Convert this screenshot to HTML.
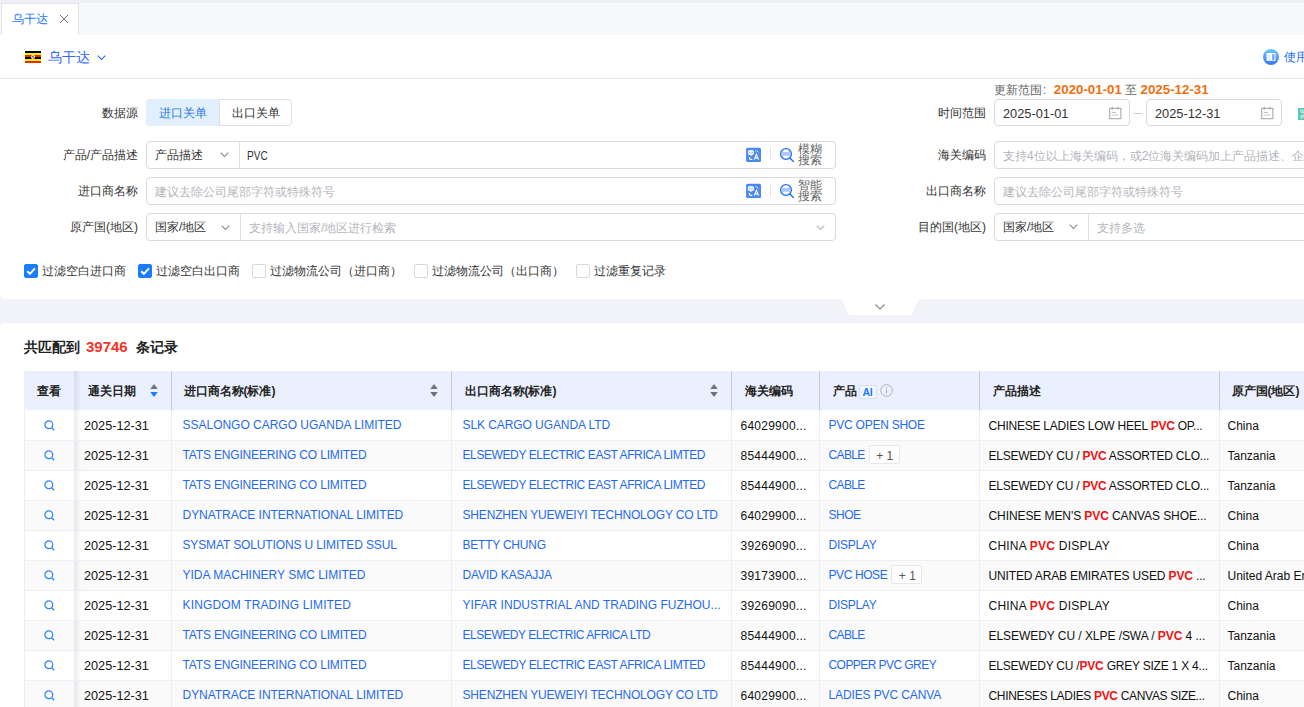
<!DOCTYPE html>
<html><head><meta charset="utf-8">
<style>
*{box-sizing:border-box;margin:0;padding:0}
html,body{width:1304px;height:707px;overflow:hidden;background:#f2f3f8;font-family:"Liberation Sans",sans-serif;color:#333;font-size:12px}
.a{position:absolute}
.nowrap{white-space:nowrap}
#topstrip{left:0;top:0;width:1304px;height:3px;background:#eef0f5}
#tabbar{left:0;top:3px;width:1304px;height:32px;background:#f7f8fa}
#tab{left:1px;top:3px;width:78px;height:32px;background:#fff;border:1px solid #e2e4e8;border-bottom:none}
#page{left:0;top:35px;width:1304px;height:264px;background:#fff;border-radius:0 0 0 5px}
.lbl{position:absolute;text-align:right;white-space:nowrap;font-size:12px;color:#333;line-height:14px}
.inp{position:absolute;height:28px;border:1px solid #d9dadd;border-radius:4px;background:#fff}
.ph{position:absolute;color:#b3b5ba;white-space:nowrap;font-size:12px;line-height:14px}
.tx{position:absolute;color:#333;white-space:nowrap;font-size:12px;line-height:14px}
.chev{position:absolute;width:7px;height:7px;border-right:1px solid #a8abb2;border-bottom:1px solid #a8abb2;transform:rotate(45deg)}
.cb{position:absolute;width:14px;height:14px;border:1px solid #d9d9d9;border-radius:2px;background:#fff}
.cb.on{background:#1a7cff;border-color:#1a7cff}
.cbt{position:absolute;top:264px;font-size:12px;line-height:14px;white-space:nowrap;color:#333}
#results{left:0;top:323px;width:1304px;height:400px;background:#fff;border-radius:5px 0 0 0}
table{position:absolute;left:24px;top:371px;border-collapse:collapse;table-layout:fixed;width:1315px}
th{height:39px;padding-top:1px;background:#eaf0fd;font-weight:bold;font-size:12px;text-align:left;white-space:nowrap;color:#222;position:relative}
td{height:30px;border-bottom:1px solid #ebeef5;border-right:1px solid #ebeef5;white-space:nowrap;overflow:hidden;font-size:12px;color:#111;padding:0 0 0 10px;line-height:29px;vertical-align:top}
tr:nth-child(odd) td{background-color:#fafafa}
th.hs{border-left:1px solid #c5c9d2}
th.h1,td.c1{background-image:linear-gradient(to right,rgba(20,30,80,.09),rgba(20,30,80,0) 7px)}
td.c0{border-right:none}
.c0{text-align:center;padding:0!important}
.c0 svg{display:inline-block;vertical-align:middle;position:relative;top:0px}
th .sort{position:absolute;right:13px;top:13px}
.ai{display:inline-block;margin-left:2px;width:18px;height:14px;line-height:12px;text-align:center;border:1px solid #d3e0fb;background:#f3f6fe;color:#1a7cff;font-size:10.5px;font-weight:bold;vertical-align:-1px;border-radius:2px;letter-spacing:-.2px}
th .info{vertical-align:-2px;margin-left:3px}
td.c1{font-size:12.7px;padding-left:10px}
td.c2,td.c3{padding-left:11px}
td.c4{letter-spacing:.25px;padding-left:9px}
td.c5{padding-left:9px}
td.c6{padding-left:9px;text-overflow:clip}
td.c7{padding-left:8px}
.lnk{color:#1f6af2}
.lnk span{position:relative;top:0px}
.p{position:relative;top:1px}
.lnk span.tag{top:0}
tr:nth-child(2) .p{top:2px}
tr:nth-child(2) .lnk span{top:1px}
tr:nth-child(2) .c0 svg{top:1px}
.tag{display:inline-block;margin-left:4px;width:31px;text-align:center;height:19px;line-height:20px;padding:0 0 0 1px;border:1px solid #e6e7ea;border-radius:2px;color:#555;background:#fff;font-size:12px;vertical-align:top;margin-top:4px;letter-spacing:0}
.red{color:#f01414;font-weight:bold}
</style></head><body>
<div id="topstrip" class="a"></div>
<div id="tabbar" class="a"></div>
<div id="tab" class="a"></div>
<div class="a nowrap" style="left:12px;top:12px;font-size:12px;line-height:14px;color:#1a7cff">乌干达</div>
<svg class="a" style="left:59px;top:14px" width="10" height="10" viewBox="0 0 10 10"><path d="M1 1L9 9M9 1L1 9" stroke="#707070" stroke-width="1"/></svg>

<div id="page" class="a"></div>
<!-- country header -->
<svg class="a" style="left:25px;top:51px" width="16" height="12" viewBox="0 0 16 12">
<rect y="0" width="16" height="2" fill="#000"/><rect y="2" width="16" height="2" fill="#fff200"/><rect y="4" width="16" height="2" fill="#e52c00"/><rect y="6" width="16" height="2" fill="#000"/><rect y="8" width="16" height="2" fill="#fff200"/><rect y="10" width="16" height="2" fill="#e52c00"/><circle cx="8" cy="6" r="2" fill="#fff"/><circle cx="7.6" cy="5.6" r="0.8" fill="#555"/><circle cx="8.5" cy="6.5" r="0.7" fill="#d33"/></svg>
<div class="a nowrap" style="left:48px;top:49px;font-size:14px;line-height:16px;color:#2f6bff;font-weight:500">乌干达</div>
<svg class="a" style="left:97px;top:54.5px" width="9" height="6" viewBox="0 0 9 6"><path d="M0.7 0.7L4.5 4.5L8.3 0.7" fill="none" stroke="#2f6bff" stroke-width="1.15"/></svg>
<div class="a" style="left:0;top:78px;width:1304px;height:1px;background:#e8e9ec"></div>
<svg class="a" style="left:1263px;top:49px" width="16" height="16" viewBox="0 0 16 16"><defs><linearGradient id="g1" x1="0" y1="0" x2="0" y2="1"><stop offset="0" stop-color="#6cc9ff"/><stop offset="1" stop-color="#3a76f4"/></linearGradient></defs><circle cx="8" cy="8" r="8" fill="url(#g1)"/><path d="M4.1 4.6h3.6v6.6H4.1Z" fill="#dff0ff" stroke="#fff" stroke-width="1.1"/><path d="M8.5 4.6h3.5v6.6H8.5Z" fill="none" stroke="#fff" stroke-width="1.1"/><path d="M9.6 5.5v4.8M10.8 5.5v4.8" stroke="#8fc4ff" stroke-width="0.6"/></svg>
<div class="a nowrap" style="left:1284px;top:50px;font-size:12px;line-height:14px;color:#1f6cff">使用</div>

<!-- left form -->
<div class="lbl" style="right:1166px;top:106px">数据源</div>
<div class="a" style="left:146px;top:99px;width:146px;height:27px;border:1px solid #dcdfe6;border-radius:4px;background:#fff"></div>
<div class="a" style="left:146px;top:99px;width:74px;height:27px;border-radius:4px 0 0 4px;background:#e1f0fc"></div>
<div class="a" style="left:219px;top:99px;width:1px;height:27px;background:#dcdfe6"></div>
<div class="tx" style="left:159px;top:106px;color:#2a7ae2">进口关单</div>
<div class="tx" style="left:232px;top:106px">出口关单</div>

<div class="lbl" style="right:1166px;top:148px">产品/产品描述</div>
<div class="inp" style="left:146px;top:141px;width:690px"></div>
<div class="a" style="left:239px;top:142px;width:1px;height:26px;background:#dcdfe6"></div>
<div class="tx" style="left:155px;top:148px">产品描述</div>
<svg class="a" style="left:219.5px;top:152.3px" width="9" height="6" viewBox="0 0 9 6"><path d="M0.7 0.7L4.5 4.5L8.3 0.7" fill="none" stroke="#8b8d96" stroke-width="1.1"/></svg>
<div class="tx" style="left:247px;top:149px;font-size:12px;transform:scaleX(.84);transform-origin:0 0">PVC</div>

<div class="lbl" style="right:1166px;top:184px">进口商名称</div>
<div class="inp" style="left:146px;top:177px;width:690px"></div>
<div class="ph" style="left:155px;top:185px">建议去除公司尾部字符或特殊符号</div>

<div class="lbl" style="right:1166px;top:220px">原产国(地区)</div>
<div class="inp" style="left:146px;top:213px;width:690px"></div>
<div class="a" style="left:240px;top:214px;width:1px;height:26px;background:#dcdfe6"></div>
<div class="tx" style="left:155px;top:220px">国家/地区</div>
<svg class="a" style="left:220.5px;top:224.5px" width="9" height="6" viewBox="0 0 9 6"><path d="M0.7 0.7L4.5 4.5L8.3 0.7" fill="none" stroke="#8b8d96" stroke-width="1.1"/></svg>
<div class="ph" style="left:249px;top:221px">支持输入国家/地区进行检索</div>
<svg class="a" style="left:816px;top:224.5px" width="9" height="6" viewBox="0 0 9 6"><path d="M0.7 0.7L4.5 4.5L8.3 0.7" fill="none" stroke="#b5b7bd" stroke-width="1.1"/></svg>

<!-- icons row1/2 -->
<svg class="a" style="left:746px;top:147px" width="16" height="16" viewBox="0 0 16 16"><rect x="0.1" y="0.7" width="14.9" height="14.4" rx="1.5" fill="#4b88f1"/><rect x="2.4" y="3.9" width="5" height="3.5" rx="0.9" fill="#9fc0f8" stroke="#fff" stroke-width="1.1"/><path d="M4.9 2.9v6" stroke="#fff" stroke-width="1.1"/><path d="M9.4 3.5L11.2 4.2L12.5 5.8" fill="none" stroke="#fff" stroke-width="1" stroke-dasharray="1.2 0.6"/><path d="M3.5 10.1v1.1q0 1.2 1.1 1.2h1.7" fill="none" stroke="#fff" stroke-width="1.1"/><path d="M8.3 12.6L10.4 7.2L12.6 12.6M9.1 10.9h2.6" fill="none" stroke="#fff" stroke-width="1.1"/></svg>
<div class="a" style="left:770px;top:147px;width:1px;height:14px;background:#e4e6ea"></div>
<svg class="a" style="left:779px;top:147px" width="16" height="16" viewBox="0 0 16 16"><circle cx="7" cy="7" r="5.4" fill="none" stroke="#1f6ff3" stroke-width="1.35"/><path d="M10.9 10.9L14.4 14.4" stroke="#1f6ff3" stroke-width="1.4" stroke-linecap="round"/><rect x="3.1" y="4.9" width="7.8" height="3.9" rx="0.6" fill="#a9c7fb"/><path d="M8.8 4.9L10.6 3.6V4.9Z" fill="#8fb5f9"/><path d="M5.2 8.8L3.4 10.1V8.8Z" fill="#8fb5f9"/></svg>
<div class="a" style="left:798px;top:144px;font-size:12px;line-height:11px;color:#666;width:26px">模糊<br>搜索</div>

<svg class="a" style="left:746px;top:183px" width="16" height="16" viewBox="0 0 16 16"><rect x="0.1" y="0.7" width="14.9" height="14.4" rx="1.5" fill="#4b88f1"/><rect x="2.4" y="3.9" width="5" height="3.5" rx="0.9" fill="#9fc0f8" stroke="#fff" stroke-width="1.1"/><path d="M4.9 2.9v6" stroke="#fff" stroke-width="1.1"/><path d="M9.4 3.5L11.2 4.2L12.5 5.8" fill="none" stroke="#fff" stroke-width="1" stroke-dasharray="1.2 0.6"/><path d="M3.5 10.1v1.1q0 1.2 1.1 1.2h1.7" fill="none" stroke="#fff" stroke-width="1.1"/><path d="M8.3 12.6L10.4 7.2L12.6 12.6M9.1 10.9h2.6" fill="none" stroke="#fff" stroke-width="1.1"/></svg>
<div class="a" style="left:770px;top:183px;width:1px;height:14px;background:#e4e6ea"></div>
<svg class="a" style="left:779px;top:183px" width="16" height="16" viewBox="0 0 16 16"><circle cx="7" cy="7" r="5.4" fill="none" stroke="#1f6ff3" stroke-width="1.35"/><path d="M10.9 10.9L14.4 14.4" stroke="#1f6ff3" stroke-width="1.4" stroke-linecap="round"/><rect x="3.1" y="4.9" width="7.8" height="3.9" rx="0.6" fill="#a9c7fb"/><path d="M8.8 4.9L10.6 3.6V4.9Z" fill="#8fb5f9"/><path d="M5.2 8.8L3.4 10.1V8.8Z" fill="#8fb5f9"/></svg>
<div class="a" style="left:798px;top:180px;font-size:12px;line-height:11px;color:#666;width:26px">智能<br>搜索</div>

<!-- right form -->
<div class="a nowrap" style="left:994px;top:83px;font-size:12px;line-height:14px;color:#666">更新范围<span style="margin:0 7.5px 0 1px">:</span><b style="color:#f06f0c;font-size:13.3px">2020-01-01</b> 至 <b style="color:#f06f0c;font-size:13.3px">2025-12-31</b></div>
<div class="lbl" style="right:318px;top:106px">时间范围</div>
<div class="inp" style="left:994px;top:99px;width:136px;height:27px"></div>
<div class="tx" style="left:1003px;top:107px;font-size:12.8px">2025-01-01</div>
<svg class="a" style="left:1109px;top:106px" width="13" height="14" viewBox="0 0 13 14"><rect x="0.7" y="2.4" width="11.2" height="10.3" fill="none" stroke="#a9a9a9" stroke-width="1.1"/><path d="M3.3 0.8v2.6M8.9 0.8v2.6" stroke="#a9a9a9" stroke-width="1.3"/><path d="M2.7 6.4h4.3" stroke="#a9a9a9" stroke-width="0.9"/><path d="M2.7 9.1h6.5" stroke="#c4c4c4" stroke-width="1"/></svg>
<div class="a" style="left:1134px;top:113px;width:8px;height:1px;background:#ccc"></div>
<div class="inp" style="left:1146px;top:99px;width:136px;height:27px"></div>
<div class="tx" style="left:1155px;top:107px;font-size:12.8px">2025-12-31</div>
<svg class="a" style="left:1261px;top:106px" width="13" height="14" viewBox="0 0 13 14"><rect x="0.7" y="2.4" width="11.2" height="10.3" fill="none" stroke="#a9a9a9" stroke-width="1.1"/><path d="M3.3 0.8v2.6M8.9 0.8v2.6" stroke="#a9a9a9" stroke-width="1.3"/><path d="M2.7 6.4h4.3" stroke="#a9a9a9" stroke-width="0.9"/><path d="M2.7 9.1h6.5" stroke="#c4c4c4" stroke-width="1"/></svg>
<svg class="a" style="left:1298px;top:108px" width="8" height="12" viewBox="0 0 8 12"><rect width="8" height="12" fill="#5ec9b8"/><circle cx="4" cy="3.2" r="1.3" fill="none" stroke="#e8f8f5" stroke-width="0.9"/><circle cx="4" cy="8.6" r="1.3" fill="none" stroke="#e8f8f5" stroke-width="0.9"/><path d="M5 4.2L7 6L5 7.6" fill="none" stroke="#e8f8f5" stroke-width="0.9"/></svg>

<div class="lbl" style="right:318px;top:148px">海关编码</div>
<div class="inp" style="left:994px;top:141px;width:340px"></div>
<div class="ph" style="left:1003px;top:149px">支持4位以上海关编码，或2位海关编码加上产品描述、企业名称</div>

<div class="lbl" style="right:318px;top:184px">出口商名称</div>
<div class="inp" style="left:994px;top:177px;width:340px"></div>
<div class="ph" style="left:1003px;top:185px">建议去除公司尾部字符或特殊符号</div>

<div class="lbl" style="right:318px;top:220px">目的国(地区)</div>
<div class="inp" style="left:994px;top:213px;width:340px"></div>
<div class="a" style="left:1088px;top:214px;width:1px;height:26px;background:#dcdfe6"></div>
<div class="tx" style="left:1003px;top:220px">国家/地区</div>
<svg class="a" style="left:1068.7px;top:224.2px" width="9" height="6" viewBox="0 0 9 6"><path d="M0.7 0.7L4.5 4.5L8.3 0.7" fill="none" stroke="#8b8d96" stroke-width="1.1"/></svg>
<div class="ph" style="left:1097px;top:221px">支持多选</div>

<!-- checkboxes -->
<div class="cb on" style="left:24px;top:264px"><svg width="14" height="14" style="position:absolute;left:-1px;top:-1px"><path d="M3.2 7.2L5.9 9.8L10.9 4.4" fill="none" stroke="#fff" stroke-width="1.9"/></svg></div><div class="cbt" style="left:42px">过滤空白进口商</div>
<div class="cb on" style="left:138px;top:264px"><svg width="14" height="14" style="position:absolute;left:-1px;top:-1px"><path d="M3.2 7.2L5.9 9.8L10.9 4.4" fill="none" stroke="#fff" stroke-width="1.9"/></svg></div><div class="cbt" style="left:156px">过滤空白出口商</div>
<div class="cb" style="left:252px;top:264px"></div><div class="cbt" style="left:270px">过滤物流公司（进口商）</div>
<div class="cb" style="left:414px;top:264px"></div><div class="cbt" style="left:432px">过滤物流公司（出口商）</div>
<div class="cb" style="left:576px;top:264px"></div><div class="cbt" style="left:594px">过滤重复记录</div>

<!-- collapse tab -->
<svg class="a" style="left:838px;top:298px" width="84" height="18" viewBox="0 0 84 18"><path d="M3 0H81L74 17H11Z" fill="#fff"/></svg>
<svg class="a" style="left:875px;top:303.5px" width="10" height="6" viewBox="0 0 10 6"><path d="M0.5 0.5L5 5L9.5 0.5" fill="none" stroke="#878a96" stroke-width="1.15"/></svg>

<!-- results -->
<div id="results" class="a"></div>
<div class="a nowrap" style="left:24px;top:339px;font-size:14px;line-height:16px;font-weight:bold;color:#222">共匹配到</div>
<div class="a nowrap" style="left:86px;top:339px;font-size:15px;line-height:16px;font-weight:bold;color:#f0352b">39746</div>
<div class="a nowrap" style="left:136px;top:339px;font-size:14px;line-height:16px;font-weight:bold;color:#222">条记录</div>

<table id="tbl">
<colgroup><col style="width:50px"><col style="width:97px"><col style="width:280px"><col style="width:280px"><col style="width:88px"><col style="width:160px"><col style="width:240px"><col style="width:120px"></colgroup>
<tr><th style="text-align:center">查看</th><th class="h1" style="padding-left:14px">通关日期<svg class="sort" width="8" height="14" viewBox="0 0 8 14"><path d="M4 0L7.7 5.1H0.3Z" fill="#6e7079"/><path d="M4 13L7.7 7.9H0.3Z" fill="#1a7cff"/></svg></th><th class="hs" style="padding-left:12px">进口商名称(标准)<svg class="sort" width="8" height="14" viewBox="0 0 8 14"><path d="M4 0L7.7 5.1H0.3Z" fill="#6e7079"/><path d="M4 13L7.7 7.9H0.3Z" fill="#6e7079"/></svg></th><th class="hs" style="padding-left:13px">出口商名称(标准)<svg class="sort" width="8" height="14" viewBox="0 0 8 14"><path d="M4 0L7.7 5.1H0.3Z" fill="#6e7079"/><path d="M4 13L7.7 7.9H0.3Z" fill="#6e7079"/></svg></th><th class="hs" style="padding-left:13px">海关编码</th><th class="hs" style="padding-left:13px">产品<span class="ai">AI</span><svg class="info" width="13" height="13" viewBox="0 0 13 13"><circle cx="6.5" cy="6.5" r="5.8" fill="none" stroke="#b0b3b9" stroke-width="1"/><path d="M6.5 5.5v4.2" stroke="#b0b3b9" stroke-width="1.1"/><circle cx="6.5" cy="3.7" r="0.7" fill="#b0b3b9"/></svg></th><th class="hs" style="padding-left:13px">产品描述</th><th class="hs" style="padding-left:12px">原产国(地区)</th></tr>
<tr><td class="c0"><svg width="11" height="11" viewBox="0 0 11 11"><circle cx="4.8" cy="4.8" r="3.9" fill="none" stroke="#2f86f6" stroke-width="1.3"/><path d="M7.7 7.7L10.2 10.2" stroke="#2f86f6" stroke-width="1.3"/></svg></td><td class="c1"><span class="p">2025-12-31</span></td><td class="lnk c2"><span style="letter-spacing:-0.015px">SSALONGO CARGO UGANDA LIMITED</span></td><td class="lnk c3"><span style="letter-spacing:-0.08px">SLK CARGO UGANDA LTD</span></td><td class="c4"><span class="p">64029900...</span></td><td class="lnk c5"><span style="letter-spacing:-0.243px">PVC OPEN SHOE</span></td><td class="c6" style="letter-spacing:-0.227px"><span class="p">CHINESE LADIES LOW HEEL <span class="red">PVC</span> OP...</span></td><td class="c7"><span class="p">China</span></td></tr>
<tr><td class="c0"><svg width="11" height="11" viewBox="0 0 11 11"><circle cx="4.8" cy="4.8" r="3.9" fill="none" stroke="#2f86f6" stroke-width="1.3"/><path d="M7.7 7.7L10.2 10.2" stroke="#2f86f6" stroke-width="1.3"/></svg></td><td class="c1"><span class="p">2025-12-31</span></td><td class="lnk c2"><span style="letter-spacing:-0.161px">TATS ENGINEERING CO LIMITED</span></td><td class="lnk c3"><span style="letter-spacing:-0.4px">ELSEWEDY ELECTRIC EAST AFRICA LIMTED</span></td><td class="c4"><span class="p">85444900...</span></td><td class="lnk c5"><span style="letter-spacing:-0.63px">CABLE</span><span class="tag">+ 1</span></td><td class="c6" style="letter-spacing:-0.232px"><span class="p">ELSEWEDY CU / <span class="red">PVC</span> ASSORTED CLO...</span></td><td class="c7"><span class="p">Tanzania</span></td></tr>
<tr><td class="c0"><svg width="11" height="11" viewBox="0 0 11 11"><circle cx="4.8" cy="4.8" r="3.9" fill="none" stroke="#2f86f6" stroke-width="1.3"/><path d="M7.7 7.7L10.2 10.2" stroke="#2f86f6" stroke-width="1.3"/></svg></td><td class="c1"><span class="p">2025-12-31</span></td><td class="lnk c2"><span style="letter-spacing:-0.161px">TATS ENGINEERING CO LIMITED</span></td><td class="lnk c3"><span style="letter-spacing:-0.4px">ELSEWEDY ELECTRIC EAST AFRICA LIMTED</span></td><td class="c4"><span class="p">85444900...</span></td><td class="lnk c5"><span style="letter-spacing:-0.63px">CABLE</span></td><td class="c6" style="letter-spacing:-0.232px"><span class="p">ELSEWEDY CU / <span class="red">PVC</span> ASSORTED CLO...</span></td><td class="c7"><span class="p">Tanzania</span></td></tr>
<tr><td class="c0"><svg width="11" height="11" viewBox="0 0 11 11"><circle cx="4.8" cy="4.8" r="3.9" fill="none" stroke="#2f86f6" stroke-width="1.3"/><path d="M7.7 7.7L10.2 10.2" stroke="#2f86f6" stroke-width="1.3"/></svg></td><td class="c1"><span class="p">2025-12-31</span></td><td class="lnk c2"><span style="letter-spacing:-0.034px">DYNATRACE INTERNATIONAL LIMITED</span></td><td class="lnk c3"><span style="letter-spacing:-0.166px">SHENZHEN YUEWEIYI TECHNOLOGY CO LTD</span></td><td class="c4"><span class="p">64029900...</span></td><td class="lnk c5"><span style="letter-spacing:-0.502px">SHOE</span></td><td class="c6" style="letter-spacing:-0.084px"><span class="p">CHINESE MEN&#x27;S <span class="red">PVC</span> CANVAS SHOE...</span></td><td class="c7"><span class="p">China</span></td></tr>
<tr><td class="c0"><svg width="11" height="11" viewBox="0 0 11 11"><circle cx="4.8" cy="4.8" r="3.9" fill="none" stroke="#2f86f6" stroke-width="1.3"/><path d="M7.7 7.7L10.2 10.2" stroke="#2f86f6" stroke-width="1.3"/></svg></td><td class="c1"><span class="p">2025-12-31</span></td><td class="lnk c2"><span style="letter-spacing:-0.129px">SYSMAT SOLUTIONS U LIMITED SSUL</span></td><td class="lnk c3"><span style="letter-spacing:-0.228px">BETTY CHUNG</span></td><td class="c4"><span class="p">39269090...</span></td><td class="lnk c5"><span style="letter-spacing:-0.271px">DISPLAY</span></td><td class="c6" style="letter-spacing:0.222px"><span class="p">CHINA <span class="red">PVC</span> DISPLAY</span></td><td class="c7"><span class="p">China</span></td></tr>
<tr><td class="c0"><svg width="11" height="11" viewBox="0 0 11 11"><circle cx="4.8" cy="4.8" r="3.9" fill="none" stroke="#2f86f6" stroke-width="1.3"/><path d="M7.7 7.7L10.2 10.2" stroke="#2f86f6" stroke-width="1.3"/></svg></td><td class="c1"><span class="p">2025-12-31</span></td><td class="lnk c2"><span style="letter-spacing:0.004px">YIDA MACHINERY SMC LIMITED</span></td><td class="lnk c3"><span style="letter-spacing:-0.134px">DAVID KASAJJA</span></td><td class="c4"><span class="p">39173900...</span></td><td class="lnk c5"><span style="letter-spacing:-0.402px">PVC HOSE</span><span class="tag">+ 1</span></td><td class="c6" style="letter-spacing:-0.145px"><span class="p">UNITED ARAB EMIRATES USED <span class="red">PVC</span> ...</span></td><td class="c7"><span class="p">United Arab Emirates</span></td></tr>
<tr><td class="c0"><svg width="11" height="11" viewBox="0 0 11 11"><circle cx="4.8" cy="4.8" r="3.9" fill="none" stroke="#2f86f6" stroke-width="1.3"/><path d="M7.7 7.7L10.2 10.2" stroke="#2f86f6" stroke-width="1.3"/></svg></td><td class="c1"><span class="p">2025-12-31</span></td><td class="lnk c2"><span style="letter-spacing:0.15px">KINGDOM TRADING LIMITED</span></td><td class="lnk c3"><span style="letter-spacing:0.019px">YIFAR INDUSTRIAL AND TRADING FUZHOU...</span></td><td class="c4"><span class="p">39269090...</span></td><td class="lnk c5"><span style="letter-spacing:-0.271px">DISPLAY</span></td><td class="c6" style="letter-spacing:0.222px"><span class="p">CHINA <span class="red">PVC</span> DISPLAY</span></td><td class="c7"><span class="p">China</span></td></tr>
<tr><td class="c0"><svg width="11" height="11" viewBox="0 0 11 11"><circle cx="4.8" cy="4.8" r="3.9" fill="none" stroke="#2f86f6" stroke-width="1.3"/><path d="M7.7 7.7L10.2 10.2" stroke="#2f86f6" stroke-width="1.3"/></svg></td><td class="c1"><span class="p">2025-12-31</span></td><td class="lnk c2"><span style="letter-spacing:-0.161px">TATS ENGINEERING CO LIMITED</span></td><td class="lnk c3"><span style="letter-spacing:-0.447px">ELSEWEDY ELECTRIC AFRICA LTD</span></td><td class="c4"><span class="p">85444900...</span></td><td class="lnk c5"><span style="letter-spacing:-0.63px">CABLE</span></td><td class="c6" style="letter-spacing:-0.054px"><span class="p">ELSEWEDY CU / XLPE /SWA / <span class="red">PVC</span> 4 ...</span></td><td class="c7"><span class="p">Tanzania</span></td></tr>
<tr><td class="c0"><svg width="11" height="11" viewBox="0 0 11 11"><circle cx="4.8" cy="4.8" r="3.9" fill="none" stroke="#2f86f6" stroke-width="1.3"/><path d="M7.7 7.7L10.2 10.2" stroke="#2f86f6" stroke-width="1.3"/></svg></td><td class="c1"><span class="p">2025-12-31</span></td><td class="lnk c2"><span style="letter-spacing:-0.161px">TATS ENGINEERING CO LIMITED</span></td><td class="lnk c3"><span style="letter-spacing:-0.4px">ELSEWEDY ELECTRIC EAST AFRICA LIMTED</span></td><td class="c4"><span class="p">85444900...</span></td><td class="lnk c5"><span style="letter-spacing:-0.562px">COPPER PVC GREY</span></td><td class="c6" style="letter-spacing:-0.217px"><span class="p">ELSEWEDY CU /<span class="red">PVC</span> GREY SIZE 1 X 4...</span></td><td class="c7"><span class="p">Tanzania</span></td></tr>
<tr><td class="c0"><svg width="11" height="11" viewBox="0 0 11 11"><circle cx="4.8" cy="4.8" r="3.9" fill="none" stroke="#2f86f6" stroke-width="1.3"/><path d="M7.7 7.7L10.2 10.2" stroke="#2f86f6" stroke-width="1.3"/></svg></td><td class="c1"><span class="p">2025-12-31</span></td><td class="lnk c2"><span style="letter-spacing:-0.034px">DYNATRACE INTERNATIONAL LIMITED</span></td><td class="lnk c3"><span style="letter-spacing:-0.166px">SHENZHEN YUEWEIYI TECHNOLOGY CO LTD</span></td><td class="c4"><span class="p">64029900...</span></td><td class="lnk c5"><span style="letter-spacing:-0.118px">LADIES PVC CANVA</span></td><td class="c6" style="letter-spacing:-0.325px"><span class="p">CHINESES LADIES <span class="red">PVC</span> CANVAS SIZE...</span></td><td class="c7"><span class="p">China</span></td></tr>
</table>
<div class="a" style="left:24px;top:410px;width:1px;height:300px;background:#ebeef5"></div>
</body></html>
